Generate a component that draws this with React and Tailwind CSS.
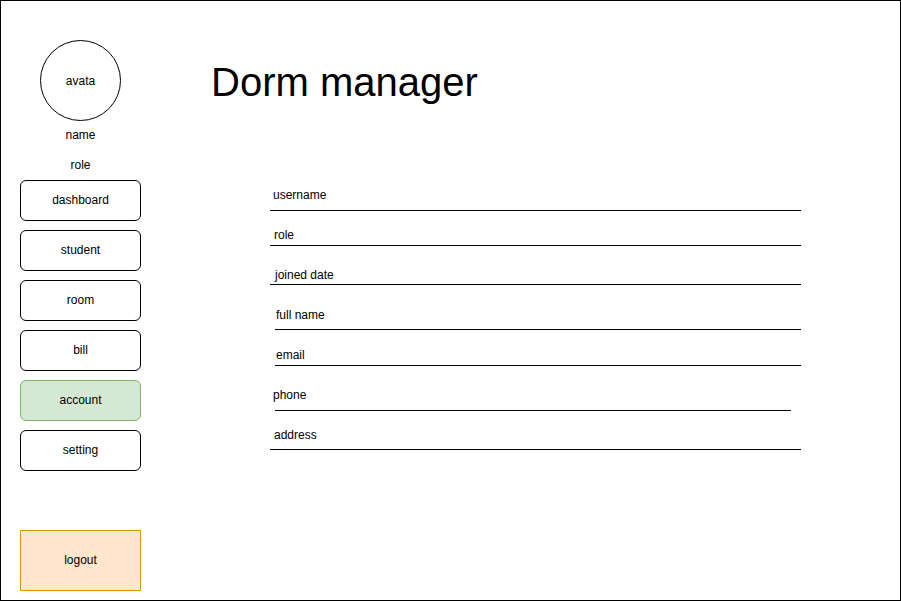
const menu = [
  { label: "dashboard", cls: "bg-white border-black" },
  { label: "student", cls: "bg-white border-black" },
  { label: "room", cls: "bg-white border-black" },
  { label: "bill", cls: "bg-white border-black" },
  { label: "account", cls: "bg-[#d5e8d4] border-[#82b366]" },
  { label: "setting", cls: "bg-white border-black" },
];

// each row: label offset, gap from previous line, label->line gap, line offset/width
const fields = [
  { label: "username", row: "mt-[83px]", text: "pl-[3px]", gap: "mt-[8px]", line: "ml-0 w-[531px]" },
  { label: "role", row: "mt-[17px]", text: "pl-[4px]", gap: "mt-[3px]", line: "ml-0 w-[531px]" },
  { label: "joined date", row: "mt-[22px]", text: "pl-[5px]", gap: "mt-[2px]", line: "ml-0 w-[531px]" },
  { label: "full name", row: "mt-[23px]", text: "pl-[6px]", gap: "mt-[7px]", line: "ml-[5px] w-[526px]" },
  { label: "email", row: "mt-[18px]", text: "pl-[6px]", gap: "mt-[3px]", line: "ml-[5px] w-[526px]" },
  { label: "phone", row: "mt-[22px]", text: "pl-[3px]", gap: "mt-[8px]", line: "ml-[5px] w-[516px]" },
  { label: "address", row: "mt-[17px]", text: "pl-[4px]", gap: "mt-[7px]", line: "ml-0 w-[531px]" },
];

export default function App() {
  return (
    <div
      className="w-[901px] h-[601px] border border-black bg-white flex text-black"
      style={{ fontFamily: '"Liberation Sans", Arial, sans-serif' }}
    >
      {/* Sidebar */}
      <aside className="w-[159px] pl-[19px] pt-[39px] flex flex-col items-start text-[12px] leading-[14px]">
        <div className="ml-[20px] w-[81px] h-[81px] rounded-full border border-black flex items-center justify-center">
          avata
        </div>
        <div className="w-[121px] text-center mt-[7px]">name</div>
        <div className="w-[121px] text-center mt-[16px]">role</div>

        <nav className="mt-[8px] flex flex-col gap-[9px]">
          {menu.map((m) => (
            <div
              key={m.label}
              className={`w-[121px] h-[41px] pb-[2px] rounded-[6px] border flex items-center justify-center ${m.cls}`}
            >
              {m.label}
            </div>
          ))}
        </nav>

        <div className="mt-[59px] w-[121px] h-[61px] pb-[2px] border border-[#d79b00] bg-[#ffe6cc] flex items-center justify-center">
          logout
        </div>
      </aside>

      {/* Main */}
      <main className="flex-1 pt-[58px]">
        <h1 className="pl-[51px] text-[40px] leading-[46px]">Dorm manager</h1>

        <div className="pl-[110px] flex flex-col text-[12px] leading-[14px]">
          {fields.map((f) => (
            <div key={f.label} className={f.row}>
              <div className={f.text}>{f.label}</div>
              <div className={`${f.gap} ${f.line} h-px bg-black`} />
            </div>
          ))}
        </div>
      </main>
    </div>
  );
}
